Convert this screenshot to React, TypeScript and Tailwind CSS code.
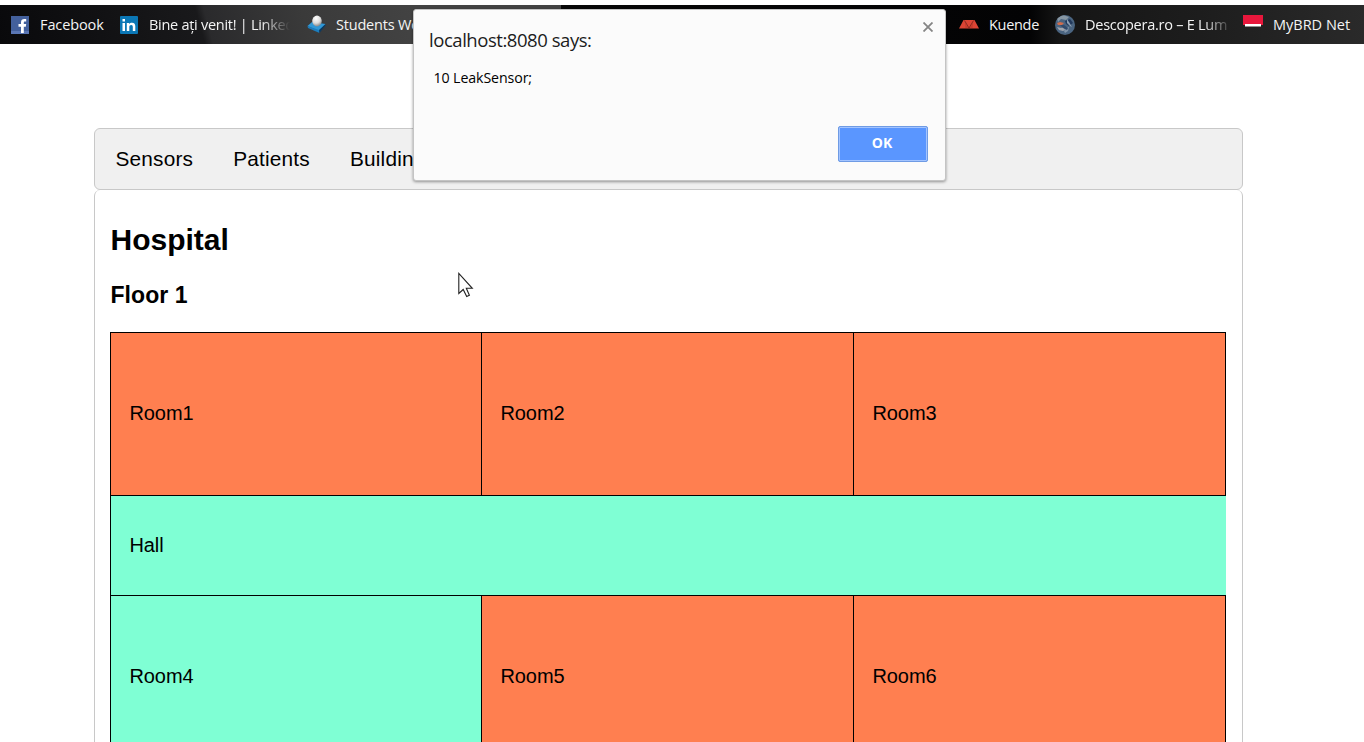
import type { ReactNode } from 'react';

function FacebookIcon() {
  return (
    <svg width="18" height="18" viewBox="0 0 18 18">
      <rect width="18" height="18" fill="#43609c" />
      <rect y="15" width="18" height="3" fill="#5a76b4" />
      <path d="M10 17V10.800H7.500V8H10V6.200C10 3.900 11.300 2.900 13.300 2.900H15.200V5.500H14C13 5.500 12.800 6 12.800 6.800V8H15.200L14.800 10.800H12.800V17Z" fill="#fff" />
    </svg>
  );
}

function LinkedinIcon() {
  return (
    <svg width="18" height="18" viewBox="0 0 18 18">
      <rect width="18" height="18" rx="1" fill="#0b77b5" />
      <path d="M2.500 7H5V15H2.500ZM2.500 3H5V5.500H2.500ZM6.800 7H9.200V8.200C9.800 7.200 10.700 6.800 12 6.800C14.500 6.800 15.300 8.400 15.300 10.600V15H12.800V11C12.800 9.700 12.400 9 11.300 9C10 9 9.300 9.900 9.300 11.200V15H6.800Z" fill="#fff" />
    </svg>
  );
}

function StudentsIcon() {
  return (
    <svg width="19" height="19" viewBox="0 0 19 19">
      <defs>
        <radialGradient id="ball" cx="0.4" cy="0.25" r="0.75">
          <stop offset="0" stopColor="#ffffff" />
          <stop offset="0.6" stopColor="#dcdcdc" />
          <stop offset="1" stopColor="#888888" />
        </radialGradient>
      </defs>
      <path d="M0.500 11L5 7L18.500 9L12.500 16.500Z" fill="#2f97d6" />
      <path d="M0.500 11L12 15L12.500 18L1 13Z" fill="#1c7dbd" />
      <path d="M12 15L18.500 9V10.500L12.500 18Z" fill="#0d3a60" />
      <ellipse cx="10" cy="6" rx="4.800" ry="5.400" fill="url(#ball)" />
    </svg>
  );
}

function KuendeIcon() {
  return (
    <svg width="20" height="9" viewBox="0 0 20 9">
      <path d="M4.500 0H15.500L20 8.500H0Z" fill="#dc4434" />
      <path d="M5.500 0.500L10 8L14.500 0.500" stroke="#6a1f18" strokeWidth="0.700" fill="none" />
      <path d="M5.800 1.500L9.500 8.500H6.500ZM14.200 1.500L10.500 8.500H13.500Z" fill="#8f2c22" opacity="0.300" />
    </svg>
  );
}

function GlobeIcon() {
  return (
    <svg width="20" height="20" viewBox="0 0 20 20">
      <defs>
        <clipPath id="disc"><circle cx="10" cy="10" r="10" /></clipPath>
      </defs>
      <g clipPath="url(#disc)">
        <rect width="20" height="20" fill="#4a6480" />
        <path d="M2 3L8 0L14 2L11 5L6 4L3 7Z" fill="#8796a3" />
        <path d="M2 8L5 7L9 8L7 10L3 10Z" fill="#d06c4c" />
        <path d="M10 6L15 4L18 8L14 11L11 9Z" fill="#22395c" />
        <path d="M2 12L6 13L9 12L10 15L8 16L4 15Z" fill="#a0a4ac" />
        <path d="M11 13L14 12L13 16L10 18L9 16Z" fill="#7f93a8" />
        <path d="M12 4L14 7L17 12L15 11L12 8Z" fill="#8da0b4" />
        <path d="M5 10L9 10L13 13L12 15L8 13Z" fill="#304a6c" />
      </g>
    </svg>
  );
}

function BrdIcon() {
  return (
    <svg width="20" height="12" viewBox="0 0 20 12">
      <rect width="20" height="10" fill="#e8173c" />
      <rect x="2" y="9" width="16" height="2.500" fill="#fff" />
    </svg>
  );
}

function Bookmark({ icon, iconBox, className, children }: { icon: ReactNode; iconBox: string; className: string; children: ReactNode }) {
  return (
    <div className={`flex h-full shrink-0 items-center ${className}`}>
      <span className={`shrink-0 ${iconBox}`}>{icon}</span>
      {children}
    </div>
  );
}

function BookmarkBar() {
  return (
    <div className="flex h-[39px] items-center whitespace-nowrap bg-[linear-gradient(90deg,transparent_561px,#080808_561px,#030304_1030px,#151515_1060px,#1d1d1d_1200px,#2a2a2a_1364px),linear-gradient(75deg,#09090b_0px,#19191b_198px,#2a2a2c_206px,#3a3a3a_300px,#434343_410px,#434343_560px)] pl-[11px] font-['Open_Sans',sans-serif] text-[14.5px] text-[#f4f4f4]">
      <Bookmark icon={<FacebookIcon />} iconBox="w-[29px]" className="w-[109px]">
        <span className="tracking-[-0.1px]">Facebook</span>
      </Bookmark>
      <Bookmark icon={<LinkedinIcon />} iconBox="w-[29px]" className="w-[187px]">
        <span className="tracking-[-0.28px] [mask-image:linear-gradient(to_right,#000_112px,transparent_141px)]">Bine ați venit! | Linked</span>
      </Bookmark>
      <Bookmark icon={<StudentsIcon />} iconBox="w-[29px]" className="w-[652px]">
        <span className="tracking-[-0.2px]">Students Wo</span>
      </Bookmark>
      <Bookmark icon={<KuendeIcon />} iconBox="w-[30px]" className="w-[96px]">
        <span className="tracking-[-0.3px]">Kuende</span>
      </Bookmark>
      <Bookmark icon={<GlobeIcon />} iconBox="w-[30px]" className="w-[188px]">
        <span className="tracking-[-0.25px] [mask-image:linear-gradient(to_right,#000_118px,transparent_148px)]">Descopera.ro – E Lum</span>
      </Bookmark>
      <Bookmark icon={<BrdIcon />} iconBox="w-[30px] pb-[7px]" className="w-[120px]">
        <span>MyBRD Net</span>
      </Bookmark>
    </div>
  );
}

function AlertDialog() {
  return (
    <div className="absolute left-[413px] top-[9px] flex h-[172px] w-[533px] flex-col rounded-[3px] border border-[#c4c4c4] bg-[#fbfbfb] font-['Open_Sans',sans-serif] text-black shadow-[0_1px_3px_rgba(0,0,0,0.4)]">
      <div className="flex items-start justify-between pl-[15px] pr-3 pt-[16px]">
        <h1 className="text-[18.5px] font-normal leading-7 tracking-[-0.45px] text-[#1c1c1c]">localhost:8080 says:</h1>
        <svg width="10" height="10" viewBox="0 0 10 10" className="-mt-[4px]">
          <path d="M0.500 0.500L9.500 9.500M9.500 0.500L0.500 9.500" stroke="#858585" strokeWidth="1.800" />
        </svg>
      </div>
      <p className="pl-[19.500px] pt-[14px] text-[14.2px] leading-5 tracking-[-0.1px]">10 LeakSensor;</p>
      <button className="mb-[18px] mr-[17px] mt-auto h-9 w-[90px] self-end rounded-[2px] border border-[#6f9be4] bg-[#5a96ff] pb-[3px] pr-[2px] text-[14px] font-bold text-white shadow-[inset_0_0_0_1px_#a3c4ff]">OK</button>
    </div>
  );
}

function Cell({ name, className }: { name: string; className: string }) {
  return <div className={`flex items-center border-l border-t border-black pl-[18.5px] tracking-[-0.1px] ${className}`}>{name}</div>;
}

export default function App() {
  return (
    <div className="relative h-[742px] w-[1364px] overflow-hidden bg-white pt-[5px] font-['Liberation_Sans',Arial,sans-serif] text-black">
      <BookmarkBar />
      <nav className="ml-[94px] mt-[84px] flex h-[62px] w-[1149px] items-center gap-10 rounded-md border border-[#c8c8c8] bg-[#f0f0f0] pl-[20.5px] text-[20.8px] tracking-[0.2px]">
        <a>Sensors</a>
        <a>Patients</a>
        <a>Buildin</a>
      </nav>
      <main className="ml-[94px] h-[570px] w-[1149px] rounded-t-md border border-t-0 border-[#c8c8c8] px-[15px] pt-[30px]">
        <h2 className="pl-[0.5px] text-[30px] font-bold leading-10">Hospital</h2>
        <h3 className="mt-5 pl-[0.5px] text-[23px] font-bold leading-[30px] tracking-[0.05px]">Floor 1</h3>
        <div className="mt-[22px] grid w-[1116px] grid-cols-[371px_372px_373px] grid-rows-[163px_100px_163px] text-[20px]">
          <Cell name="Room1" className="bg-[#ff7f50] pb-[2px]" />
          <Cell name="Room2" className="bg-[#ff7f50] pb-[2px]" />
          <Cell name="Room3" className="border-r bg-[#ff7f50] pb-[2px]" />
          <Cell name="Hall" className="col-span-3 bg-[#7fffd4] pb-[2px]" />
          <Cell name="Room4" className="bg-[#7fffd4] pb-[2px]" />
          <Cell name="Room5" className="bg-[#ff7f50] pb-[2px]" />
          <Cell name="Room6" className="border-r bg-[#ff7f50] pb-[2px]" />
        </div>
      </main>
      <svg className="absolute left-[458px] top-[272px]" width="16" height="26" viewBox="0 0 16 26">
        <path d="M0.800 1.500V21.500L5.200 17.500L8.700 24.500L11.400 23.200L8.300 16.300H14.300Z" fill="#fff" stroke="#222" strokeWidth="1.100" />
      </svg>
      <AlertDialog />
    </div>
  );
}
